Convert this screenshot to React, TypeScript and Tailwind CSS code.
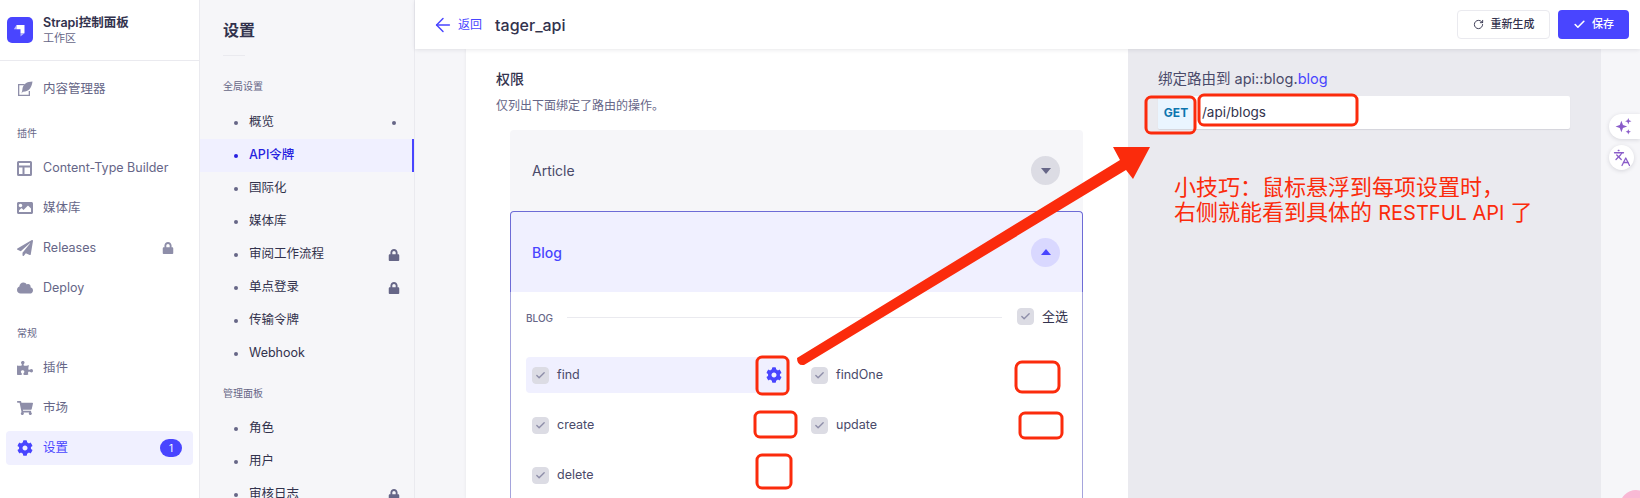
import React from 'react';
import { ArrowLeft, Check, Languages, RotateCw } from 'lucide-react';
import { FaCloud, FaCog, FaImage, FaLock, FaPaperPlane, FaPuzzlePiece, FaShoppingCart } from 'react-icons/fa';

const MainNavItem = ({ icon, label, lock, active, badge }: { icon: React.ReactNode; label: string; lock?: boolean; active?: boolean; badge?: string }) => (
  <div className="h-10 px-[6px] py-[3px]">
    <div className={`flex h-[34px] items-center rounded-[4px] pl-[11px] pr-[11px] ${active ? 'bg-[#f0f0ff] text-[#4945ff]' : 'text-[#666687]'}`}>
      <span className={`flex w-[26px] text-[16px] ${active ? 'text-[#4945ff]' : 'text-[#8e8ea9]'}`}>{icon}</span>
      <span className="flex-1 text-[12.500px]">{label}</span>
      {lock && <FaLock className="mr-[8px] text-[12px] text-[#8e8ea9]" />}
      {badge && (
        <span className="flex h-[18px] w-[22px] items-center justify-center rounded-full bg-[#4945ff] text-[10px] text-white">{badge}</span>
      )}
    </div>
  </div>
);

const NavLabel = ({ children, short }: { children: React.ReactNode; short?: boolean }) => (
  <div className={`pl-[17px] text-[10px] leading-4 text-[#666687] ${short ? 'h-[39px] pt-[16px]' : 'h-10 pt-[17px]'}`}>{children}</div>
);

const SubItem = ({ label, lock, dot, active }: { label: string; lock?: boolean; dot?: boolean; active?: boolean }) => (
  <div className={`flex h-[33px] items-center pl-[34px] pr-[14px] ${active ? 'border-r-2 border-[#4945ff] bg-[#f0f0ff] text-[#271fe0]' : 'text-[#32324d]'}`}>
    <span className={`mr-[11px] h-1 w-1 rounded-full ${active ? 'bg-[#271fe0]' : 'bg-[#666687]'}`} />
    <span className={`flex-1 text-[12.500px] ${active ? 'font-medium' : ''}`}>{label}</span>
    {lock && <FaLock className="text-[12px] text-[#666687]" />}
    {dot && <span className="mr-[4px] h-1 w-1 rounded-full bg-[#666687]" />}
  </div>
);

const SubLabel = ({ children }: { children: React.ReactNode }) => (
  <div className="flex h-5 items-center pl-[23px] text-[10px] text-[#666687]">{children}</div>
);

const Checkbox = () => (
  <span className="flex h-[17px] w-[17px] shrink-0 items-center justify-center rounded-[4px] border border-[#dcdce4] bg-[#dcdce4]">
    <Check size={11} strokeWidth={3} className="text-[#8e8ea9]" />
  </span>
);

const Action = ({ label, hovered }: { label: string; hovered?: boolean }) => (
  <div className={`flex h-9 items-center rounded-[4px] px-[6px] ${hovered ? 'bg-[#f0f0ff]' : ''}`}>
    <Checkbox />
    <span className="ml-2 flex-1 text-[12.500px] text-[#4a4a6a]">{label}</span>
    {hovered && <FaCog className="mr-[2px] text-[16px] text-[#4945ff]" />}
  </div>
);

const StrapiLogo = () => (
  <svg width="26" height="26" viewBox="0 0 26 26">
    <rect width="26" height="26" rx="5" fill="#4945ff" />
    <path d="M17.500 8H9.500v4.200h4v4h4z" fill="#fff" />
    <path d="M9.500 8v4.200H6.800zM13.500 16.200h4L13.500 19.600z" fill="#fff" opacity=".6" />
  </svg>
);

const FeatherIcon = () => (
  <svg width="16" height="16" viewBox="0 0 16 16" fill="currentColor">
    <path d="M1 3h6.500v1.300H2.300v9.400h9.400V10H13v5H1z" />
    <path d="M15.500 .5c-5.500 .2-9.600 2-10.200 8.500L4.500 12.500l1.300-1.800c5.500 .2 8.700-3 9.700-10.200z" />
  </svg>
);

const LayoutIcon = () => (
  <svg width="15" height="15" viewBox="0 0 15 15" fill="currentColor">
    <path fillRule="evenodd" d="M0 1.500A1.500 1.500 0 0 1 1.500 0h12A1.500 1.500 0 0 1 15 1.500v12a1.500 1.500 0 0 1-1.500 1.500h-12A1.500 1.500 0 0 1 0 13.500zM2 2v2.500h11V2zm0 4.500V13h3.500V6.500zm5.500 0V13H13V6.500z" />
  </svg>
);

const SparkleIcon = () => (
  <svg width="17" height="17" viewBox="0 0 16 16" fill="#8a5cc9">
    <path d="M6 2.500l1.500 4 4 1.500-4 1.500-1.500 4-1.500-4-4-1.500 4-1.500z" />
    <path d="M12.500 0l.8 2.200 2.200.8-2.200.8-.8 2.200-.8-2.200-2.200-.8 2.200-.8zM12.500 10.500l.7 1.800 1.800.7-1.800.7-.7 1.800-.7-1.800-1.800-.7 1.800-.7z" />
  </svg>
);

// red marks drawn on top of the screenshot
const Annotations = () => (
  <svg width="1640" height="498" viewBox="0 0 1640 498" className="pointer-events-none absolute left-0 top-0">
    <g fill="none" stroke="#fb2b0c" strokeWidth="3">
      <rect x="1146" y="97" width="49" height="36" rx="5" />
      <rect x="1199" y="95" width="158" height="30" rx="5" />
      <rect x="757" y="357" width="31" height="37" rx="5" />
      <rect x="1016" y="362" width="43" height="30" rx="6" />
      <rect x="755" y="412" width="41" height="25" rx="5" />
      <rect x="1020" y="413" width="42" height="25" rx="5" />
      <rect x="757" y="455" width="34" height="33" rx="5" />
    </g>
    <path d="M797 358L1120 160L1113 147L1150 147L1133 179L1126 170L804 365Q797 366 797 358Z" fill="#fb2b0c" />
  </svg>
);

export default function App() {
  return (
    <div className="relative flex h-[498px] w-[1640px] overflow-hidden bg-[#f6f6f9] font-['Inter','Noto_Sans_CJK_SC',sans-serif]">
      {/* main nav */}
      <div className="w-[200px] shrink-0 border-r border-[#eaeaef] bg-white">
        <div className="flex h-[61px] items-center border-b border-[#eaeaef] pl-[7px]">
          <StrapiLogo />
          <div className="ml-[10px]">
            <div className="text-[12.500px] font-semibold leading-4 text-[#32324d]">Strapi控制面板</div>
            <div className="text-[11px] leading-[15px] text-[#666687]">工作区</div>
          </div>
        </div>
        <div className="pt-[8px]">
          <MainNavItem icon={<FeatherIcon />} label="内容管理器" />
          <NavLabel short>插件</NavLabel>
          <MainNavItem icon={<LayoutIcon />} label="Content-Type Builder" />
          <MainNavItem icon={<FaImage />} label="媒体库" />
          <MainNavItem icon={<FaPaperPlane />} label="Releases" lock />
          <MainNavItem icon={<FaCloud />} label="Deploy" />
          <NavLabel>常规</NavLabel>
          <MainNavItem icon={<FaPuzzlePiece />} label="插件" />
          <MainNavItem icon={<FaShoppingCart />} label="市场" />
          <MainNavItem icon={<FaCog />} label="设置" active badge="1" />
        </div>
      </div>

      {/* settings nav */}
      <div className="w-[215px] shrink-0 border-r border-[#eaeaef] bg-[#f6f6f9]">
        <div className="flex h-[55px] items-center pl-[23px] pt-[5px] text-[16px] font-semibold text-[#32324d]">设置</div>
        <div className="ml-[23px] h-px w-[22px] bg-[#eaeaef]" />
        <div className="h-5" />
        <SubLabel>全局设置</SubLabel>
        <div className="h-[10px]" />
        <SubItem label="概览" dot />
        <SubItem label="API令牌" active />
        <SubItem label="国际化" />
        <SubItem label="媒体库" />
        <SubItem label="审阅工作流程" lock />
        <SubItem label="单点登录" lock />
        <SubItem label="传输令牌" />
        <SubItem label="Webhook" />
        <div className="h-[13px]" />
        <SubLabel>管理面板</SubLabel>
        <div className="h-[9px]" />
        <SubItem label="角色" />
        <SubItem label="用户" />
        <SubItem label="审核日志" lock />
      </div>

      {/* page */}
      <div className="flex min-w-0 flex-1 flex-col">
        <div className="z-10 flex h-[49px] shrink-0 items-center bg-white pl-[17px] pr-[11px] shadow-[0_1px_4px_rgba(33,33,52,0.1)]">
          <ArrowLeft size={22} strokeWidth={1.6} className="text-[#4945ff]" />
          <span className="ml-[4px] text-[12px] text-[#4945ff]">返回</span>
          <span className="ml-[13px] flex-1 text-[16px] font-medium text-[#32324d]">tager_api</span>
          <button className="flex h-[29px] w-[93px] items-center justify-center gap-[7px] rounded-[4px] border border-[#eaeaef] bg-white text-[11px] font-medium text-[#32324d]">
            <RotateCw size={11} strokeWidth={2} />
            重新生成
          </button>
          <button className="ml-2 flex h-[29px] w-[71px] items-center justify-center gap-[6px] rounded-[4px] bg-[#4945ff] text-[11px] font-medium text-white">
            <Check size={13} strokeWidth={3} />
            保存
          </button>
        </div>

        <div className="flex min-h-0 flex-1 pl-[51px]">
          <div className="w-[662px] shrink-0 bg-white pl-[30px] pt-[20px] shadow-[0_0_3px_rgba(33,33,52,0.08)]">
            <div className="text-[14px] font-medium leading-5 text-[#32324d]">权限</div>
            <div className="mt-[7px] text-[12px] leading-5 text-[#666687]">仅列出下面绑定了路由的操作。</div>
            <div className="ml-[14px] mt-[14px] w-[573px]">
              <div className="flex h-[81px] items-center justify-between rounded-t-[4px] bg-[#f6f6f9] pl-[22px] pr-[23px]">
                <span className="text-[14px] text-[#4a4a6a]">Article</span>
                <span className="flex h-[29px] w-[29px] items-center justify-center rounded-full bg-[#dcdce4]">
                  <span className="h-0 w-0 border-x-[5px] border-t-[6px] border-x-transparent border-t-[#666687]" />
                </span>
              </div>
              <div className="flex h-[81px] items-center justify-between rounded-t-[4px] border border-b-0 border-[#6d6bd6] bg-[#f0f0ff] pl-[21px] pr-[22px]">
                <span className="text-[14px] font-medium text-[#4945ff]">Blog</span>
                <span className="flex h-[29px] w-[29px] items-center justify-center rounded-full bg-[#d9d8ff]">
                  <span className="h-0 w-0 border-x-[5px] border-b-[6px] border-x-transparent border-b-[#4945ff]" />
                </span>
              </div>
              <div className="h-[300px] border-x border-[#a5a4dc] bg-white pl-[15px] pr-[14px] pt-[16px]">
                <div className="flex h-[17px] items-center whitespace-nowrap">
                  <span className="mt-[4px] text-[10px] font-medium text-[#666687]">BLOG</span>
                  <span className="ml-[14px] mt-[2px] h-px flex-1 bg-[#eaeaef]" />
                  <span className="ml-[15px]"><Checkbox /></span>
                  <span className="ml-[8px] text-[13px] text-[#32324d]">全选</span>
                </div>
                <div className="mt-[32px] grid grid-cols-[264px_264px] gap-x-[15px] gap-y-[14px]">
                  <Action label="find" hovered />
                  <Action label="findOne" />
                  <Action label="create" />
                  <Action label="update" />
                  <Action label="delete" />
                </div>
              </div>
            </div>
          </div>

          <div className="w-[473px] shrink-0 bg-[#eaeaef] pl-[30px] pr-[31px] pt-[20px]">
            <div className="text-[14.500px] leading-5 text-[#4a4a6a]">
              绑定路由到 api::blog.<span className="text-[#4945ff]">blog</span>
            </div>
            <div className="mt-[7px] flex h-[33px] overflow-hidden rounded-[2px] bg-white shadow-[0_1px_1px_rgba(33,33,52,0.1)]">
              <span className="flex w-9 items-center justify-center bg-[#eaf5ff] text-[12px] font-bold text-[#0c75af]">GET</span>
              <span className="ml-[8px] self-center text-[13.500px] text-[#32324d]">/api/blogs</span>
            </div>
            <div className="ml-[16px] mt-[46px] text-[22px] leading-[25px] text-[#fb2b0c]">
              <div>小技巧：鼠标悬浮到每项设置时，</div>
              <div>右侧就能看到具体的 <span className="text-[20px]">RESTFUL API</span> 了</div>
            </div>
          </div>
        </div>
      </div>

      {/* floating tools */}
      <div className="absolute right-0 top-[114px] flex h-[25px] w-[31px] items-center rounded-l-full bg-white pl-[6px] shadow-[0_1px_4px_rgba(33,33,52,0.15)]">
        <SparkleIcon />
      </div>
      <div className="absolute left-[1609px] top-[145px] flex h-[25px] w-[25px] items-center justify-center rounded-full bg-white shadow-[0_1px_4px_rgba(33,33,52,0.15)]">
        <Languages size={18} strokeWidth={1.7} className="text-[#8a5cc9]" />
      </div>
      <div className="absolute left-[1620px] top-[490px] h-8 w-8 rounded-full bg-[#f9b8d4]" />

      <Annotations />
    </div>
  );
}
